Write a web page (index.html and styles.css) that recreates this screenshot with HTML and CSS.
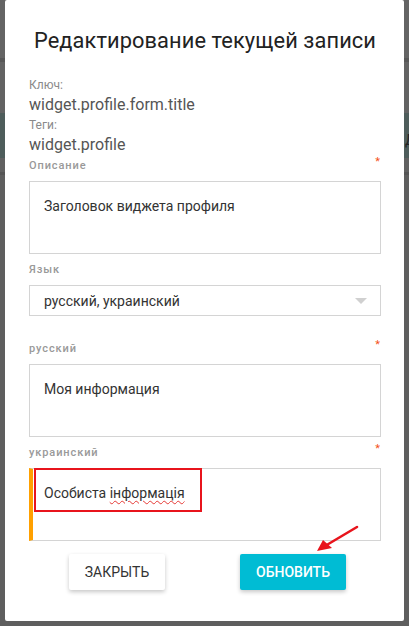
FILE: index.html
```html
<!DOCTYPE html>
<html lang="ru">
<head>
<meta charset="utf-8">
<title>Редактирование текущей записи</title>
<link rel="stylesheet" href="styles.css">
</head>
<body>
<div class="backdrop"><span class="peek">Д</span></div>
<div class="modal">
  <h1 class="title">Редактирование текущей записи</h1>
  <div class="meta">
    <div class="meta-label">Ключ:</div>
    <div class="meta-value">widget.profile.form.title</div>
    <div class="meta-label">Теги:</div>
    <div class="meta-value">widget.profile</div>
  </div>

  <div class="field field-first">
    <div class="label-row"><span class="label">Описание</span><span class="req">*</span></div>
    <div class="textarea">Заголовок виджета профиля</div>
  </div>

  <div class="field">
    <div class="label-row"><span class="label">Язык</span></div>
    <div class="select">
      <span>русский, украинский</span>
      <span class="caret"></span>
    </div>
  </div>

  <div class="field field-spaced">
    <div class="label-row"><span class="label">русский</span><span class="req">*</span></div>
    <div class="textarea">Моя информация</div>
  </div>

  <div class="field">
    <div class="label-row"><span class="label">украинский</span><span class="req">*</span></div>
    <div class="textarea textarea-active">Особиста <span class="spell">інформація</span>
      <div class="highlight"></div>
    </div>
  </div>

  <div class="actions">
    <button class="btn btn-close">ЗАКРЫТЬ</button>
    <button class="btn btn-primary">ОБНОВИТЬ</button>
  </div>

  <svg class="arrow" width="50" height="32" viewBox="0 0 50 32">
    <line x1="46" y1="5" x2="14" y2="24" stroke="#e8141c" stroke-width="2.6" stroke-linecap="round"/>
    <polygon points="6,29 12,18 21,26" fill="#e8141c"/>
  </svg>
</div>
</body>
</html>
```
FILE: styles.css
```css
* { box-sizing: border-box; }
html, body { margin: 0; padding: 0; }
body {
  width: 409px;
  height: 626px;
  overflow: hidden;
  position: relative;
  background: linear-gradient(to bottom,
    #646464 0, #646464 58px,
    #575757 58px, #575757 62px,
    #636363 62px, #636363 113px,
    #4e5d5b 113px, #4e5d5b 158px,
    #616161 158px, #616161 172px,
    #555555 172px, #555555 175px,
    #5e5e5e 175px);
  font-family: Roboto, "Noto Sans", sans-serif;
}
.backdrop { position: absolute; inset: 0; }
.peek {
  position: absolute;
  left: 405px;
  top: 132px;
  font-size: 14px;
  color: #222;
}
.modal {
  position: relative;
  margin-left: 5px;
  width: 399px;
  height: 621px;
  background: #fff;
  border-radius: 2px;
  padding: 0 23px 0 24px;
}
.title {
  margin: 0;
  padding-top: 30px;
  font-size: 21.8px;
  line-height: 22px;
  font-weight: 400;
  color: #222;
  text-align: center;
  white-space: nowrap;
  letter-spacing: 0.1px;
}
.meta { margin-top: 23px; }
.meta-label {
  font-size: 12px;
  line-height: 20px;
  color: #8a8a8a;
}
.meta-value {
  font-size: 16px;
  line-height: 20px;
  color: #555;
}
.field { margin-top: 8px; }
.field-first { margin-top: 3px; }
.field-spaced { margin-top: 25px; }
.label-row {
  display: flex;
  justify-content: space-between;
  align-items: flex-start;
  height: 16px;
  margin-bottom: 7px;
}
.label {
  font-size: 11px;
  line-height: 16px;
  font-weight: 500;
  letter-spacing: 0.9px;
  color: #999;
}
.req {
  font-size: 11px;
  line-height: 11px;
  color: #f4511e;
  margin-right: 1px;
  margin-top: -2px;
}
.textarea {
  position: relative;
  height: 73px;
  border: 1px solid #d4d4d4;
  padding: 14px 14px;
  font-size: 14px;
  line-height: 20px;
  color: #333;
}
.textarea-active {
  border-left: 4px solid #ffa000;
  padding-left: 11px;
}
.spell {
  text-decoration: underline wavy #e53935;
  text-decoration-thickness: 1px;
  text-underline-offset: 2px;
}
.highlight {
  position: absolute;
  left: 1px;
  top: -1px;
  width: 168px;
  height: 44px;
  border: 2px solid #e8141c;
}
.select {
  height: 31px;
  border: 1px solid #d4d4d4;
  padding: 1px 14px 0;
  display: flex;
  align-items: center;
  justify-content: space-between;
  font-size: 14px;
  color: #333;
}
.caret {
  width: 0;
  height: 0;
  border-left: 6px solid transparent;
  border-right: 6px solid transparent;
  border-top: 6px solid #d0d0d0;
  margin-right: -1px;
}
.actions {
  display: flex;
  justify-content: center;
  gap: 75px;
  margin-top: 13px;
  padding-left: 5px;
}
.btn {
  height: 36px;
  border: none;
  border-radius: 2px;
  font-family: Roboto, "Noto Sans", sans-serif;
  font-size: 14px;
  font-weight: 400;
  padding: 0;
  box-shadow: 0 2px 4px rgba(0,0,0,0.22);
}
.btn-close {
  width: 96px;
  background: #fff;
  color: #333;
}
.btn-primary {
  width: 106px;
  background: #00bcd4;
  color: #fff;
  font-weight: 500;
}
.arrow {
  position: absolute;
  left: 306px;
  top: 522px;
}
```
